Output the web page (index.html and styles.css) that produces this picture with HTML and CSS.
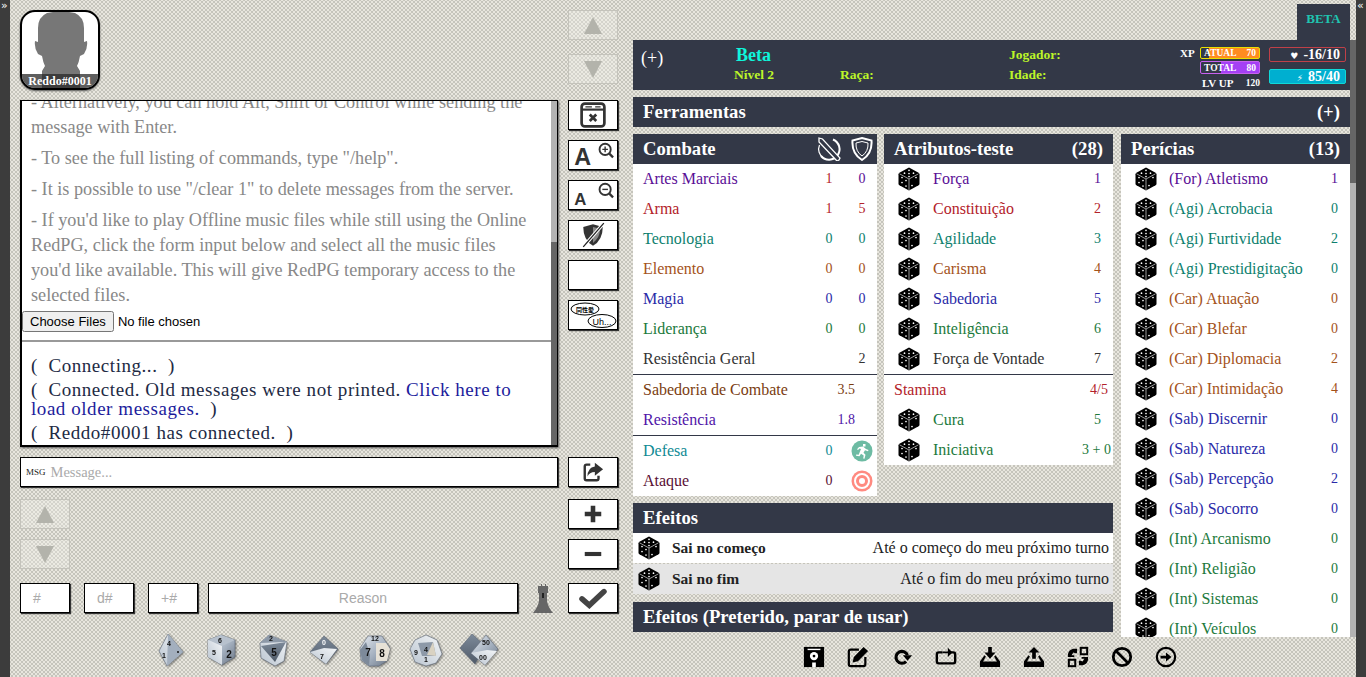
FILE: index.html
```html
<!DOCTYPE html>
<html lang="en">
<head>
<meta charset="UTF-8">
<meta name="viewport" content="width=device-width, initial-scale=1.0">
<title>RedPG</title>
<link rel="stylesheet" href="styles.css">
</head>
<body>

<svg class="sprites" aria-hidden="true">
    <symbol id="die" viewBox="0 0 24 24">
        <path d="M12 .5l9.600 5.200q.9.5.9 1.500v9.600q0 1-.9 1.500L12 23.500 2.400 18.300q-.9-.5-.9-1.500V7.200q0-1 .9-1.500z" fill="#000"/>
        <path d="M2.500 6.800L12 12l9.500-5.200M12 12v11" fill="none" stroke="#fff" stroke-width=".6"/>
        <g fill="#fff">
            <circle cx="12" cy="3.300" r=".85"/><circle cx="7.500" cy="6.200" r=".85"/><circle cx="16.500" cy="6.200" r=".85"/><circle cx="12" cy="6.500" r=".85"/><circle cx="12" cy="9.500" r=".85"/>
            <circle cx="5" cy="10.500" r=".85"/><circle cx="9" cy="13.500" r=".85"/><circle cx="5" cy="15.500" r=".85"/><circle cx="9" cy="19" r=".85"/>
            <circle cx="19" cy="10.500" r=".85"/><circle cx="15" cy="18.500" r=".85"/>
        </g>
    </symbol>
    <linearGradient id="steel" x1="0" y1="0" x2="1" y2="1">
        <stop offset="0" stop-color="#e6ebf1"/><stop offset=".55" stop-color="#a3afbe"/><stop offset="1" stop-color="#6a7584"/>
    </linearGradient>
    <linearGradient id="steel2" x1="1" y1="0" x2="0" y2="1">
        <stop offset="0" stop-color="#f4f6f8"/><stop offset="1" stop-color="#b9c4d0"/>
    </linearGradient>
    <linearGradient id="steel3" x1="0" y1="0" x2="0" y2="1">
        <stop offset="0" stop-color="#7d8a9a"/><stop offset="1" stop-color="#4f5a68"/>
    </linearGradient>
</svg>

<div class="rail"><span class="rail-arrow">»</span></div>

<div class="chat-col">
    <div class="chat-top">
        <div class="avatar">
            <svg class="avatar-pic" viewBox="0 0 76 76">
                <path d="M25 1q14-3 28 0 9 4 9 15v14l3-1q1 7-3 13l-4 2q-1 6-3 10l3 5v17H20V59l3-5q-2-4-3-10l-4-2q-4-6-3-13l3 1V16q0-11 9-15z" fill="#777"/>
            </svg>
            <div class="avatar-name">Reddo#0001</div>
        </div>
        <div class="btn-stack">
            <div class="btn-faded"><span class="tri-up"></span></div>
            <div class="btn-faded"><span class="tri-down"></span></div>
        </div>
    </div>

    <div class="chat-mid">
        <div class="chat-box">
            <div class="chat-main">
                <div class="help">
                    <p>- Alternatively, you can hold Alt, Shift or Control while sending the<br>message with Enter.</p>
                    <p>- To see the full listing of commands, type "/help".</p>
                    <p>- It is possible to use "/clear 1" to delete messages from the server.</p>
                    <p>- If you'd like to play Offline music files while still using the Online<br>RedPG, click the form input below and select all the music files<br>you'd like available. This will give RedPG temporary access to the<br>selected files.</p>
                    <input class="file-input" type="file" multiple>
                </div>
                <div class="messages">
                    <p>( &nbsp;Connecting... &nbsp;)</p>
                    <p>( &nbsp;Connected. Old messages were not printed. <a class="link">Click here to load older messages.</a> &nbsp;)</p>
                    <p>( &nbsp;Reddo#0001 has connected. &nbsp;)</p>
                </div>
            </div>
            <div class="chat-scroll"><div class="chat-thumb"></div></div>
        </div>
        <div class="tool-stack">
            <div class="btn">
                <svg class="ico-win" viewBox="0 0 24 24"><rect x="1.500" y="1.500" width="21" height="21" rx="3" fill="none" stroke="#333" stroke-width="2.500"/><path d="M2 7h20" stroke="#333" stroke-width="2"/><path d="M5 4.500h6M14 4.500h5" stroke="#333"/><path d="M9 11.500l6 6M15 11.500l-6 6" stroke="#333" stroke-width="2.500"/></svg>
            </div>
            <div class="btn">
                <svg class="ico-wide" viewBox="0 0 50 30"><text class="ico-letter" x="5" y="26" font-size="25">A</text><circle cx="38" cy="9" r="6" fill="none" stroke="#333" stroke-width="2"/><path d="M35 9h6M38 6v6" stroke="#333" stroke-width="1.500"/><path d="M42.500 13.500l4 4" stroke="#333" stroke-width="2.500"/></svg>
            </div>
            <div class="btn">
                <svg class="ico-wide" viewBox="0 0 50 30"><text class="ico-letter" x="5" y="26" font-size="18">A</text><circle cx="38" cy="9" r="6" fill="none" stroke="#333" stroke-width="2"/><path d="M35 9h6" stroke="#333" stroke-width="1.500"/><path d="M42.500 13.500l4 4" stroke="#333" stroke-width="2.500"/></svg>
            </div>
            <div class="btn">
                <svg class="ico-win" viewBox="0 0 24 24"><path d="M12 2l9 2.500q0 12-9 17.500-9-5.500-9-17.500z" fill="#333"/><path d="M12 4.500l6.500 1.800q0 8-6.500 13z" fill="#888"/><path d="M3 23L22 1" stroke="#fff" stroke-width="3"/><path d="M3 23L22 1" stroke="#222" stroke-width="1.200"/></svg>
            </div>
            <div class="btn"></div>
            <div class="btn">
                <svg class="ico-chatter" viewBox="0 0 48 28">
                    <ellipse cx="16" cy="8" rx="14" ry="6" fill="#fff" stroke="#000"/>
                    <text class="ico-cjk" x="16" y="10.500" text-anchor="middle">同性愛</text>
                    <ellipse cx="33" cy="20" rx="14" ry="6.500" fill="#fff" stroke="#000"/>
                    <text class="ico-uh" x="33" y="23.500" text-anchor="middle">Uh...</text>
                </svg>
            </div>
        </div>
    </div>

    <div class="msg-row">
        <div class="msg-box"><span class="msg-tag">MSG</span><span class="msg-hint">Message...</span></div>
        <div class="btn">
            <svg class="ico-small" viewBox="0 0 24 24"><path d="M9 4H5Q3 4 3 6v13q0 2 2 2h11q2 0 2-2v-3" fill="none" stroke="#333" stroke-width="2.600"/><path d="M14 2l9 7-9 7v-4q-6 0-8 5 0-10 8-11z" fill="#333"/></svg>
        </div>
    </div>

    <div class="adjust-row">
        <div class="btn-col">
            <div class="btn-faded"><span class="tri-up"></span></div>
            <div class="btn-faded"><span class="tri-down"></span></div>
        </div>
        <div class="btn-col">
            <div class="btn"><svg class="ico-small" viewBox="0 0 24 24"><path d="M12 3v18M3 12h18" stroke="#333" stroke-width="5"/></svg></div>
            <div class="btn"><svg class="ico-small" viewBox="0 0 24 24"><path d="M3 12h18" stroke="#333" stroke-width="4.500"/></svg></div>
        </div>
    </div>

    <div class="roll-row">
        <div class="field field-num"><span class="field-hint">#</span></div>
        <div class="field field-num"><span class="field-hint">d#</span></div>
        <div class="field field-num"><span class="field-hint">+#</span></div>
        <div class="field field-reason">Reason</div>
        <svg class="ico-tower" viewBox="0 0 22 30"><path d="M6 3h3V1h1v2h3V1h1v2h2v7h-1v8q1 6 6 12H1q5-6 6-12v-8H6z" fill="#666"/><path d="M11 10v5" stroke="#222" stroke-width="2"/></svg>
        <div class="btn"><svg class="ico-check" viewBox="0 0 32 24"><path d="M4 13l8 7L28 5" fill="none" stroke="#444" stroke-width="6" stroke-linecap="round"/></svg></div>
    </div>

    <div class="dice-row">
        <svg class="poly" viewBox="0 0 36 36"><path d="M15 2l15 18-16 14L6 19z" fill="url(#steel2)" stroke="#5c6675" stroke-width=".6"/><path d="M15 2l-1 32 16-14z" fill="#a3afbe"/><text class="pip" x="16" y="14">4</text><text class="pip" x="11" y="26">1</text><circle cx="25" cy="20" r="1" fill="#111"/></svg>
        <svg class="poly" viewBox="0 0 36 36"><path d="M17 3l14 5v17l-13 8-14-8V8z" fill="url(#steel)" stroke="#5c6675" stroke-width=".6"/><path d="M17 3l14 5-13 6L4 8z" fill="#b7c1cd"/><path d="M4 8l14 6v19L4 25z" fill="url(#steel2)"/><text class="pip pip-big" x="25" y="26">2</text><text class="pip" x="16" y="11">6</text><text class="pip" x="10" y="23">5</text></svg>
        <svg class="poly" viewBox="0 0 36 36"><path d="M14 3l18 7-3 19-9 5L6 26 5 11z" fill="url(#steel2)" stroke="#5c6675" stroke-width=".6"/><path d="M6 14l25-4-11 20z" fill="url(#steel3)"/><path d="M5 11l9-8 18 7z" fill="#8d99a8"/><text class="pip pip-big" x="19" y="24">5</text><text class="pip" x="16" y="9">2</text></svg>
        <svg class="poly" viewBox="0 0 36 36"><path d="M18 4l14 13-12 15L4 20z" fill="url(#steel3)" stroke="#5c6675" stroke-width=".6"/><path d="M4 20l14-4 13 1-11 15z" fill="url(#steel2)"/><text class="pip pip-light" x="18" y="13">0</text><text class="pip" x="16" y="27">7</text></svg>
        <svg class="poly" viewBox="0 0 36 36"><path d="M11 4h14l8 12-3 13-8 5H12l-8-6-1-12z" fill="url(#steel)" stroke="#5c6675" stroke-width=".6"/><path d="M9 10L3 18l2 10 7 6 1-11z" fill="#7d8a9a"/><path d="M19 11h10l4 6-3 12H19z" fill="#e6e1d6"/><text class="pip pip-big" x="25" y="25">8</text><text class="pip pip-big" x="11" y="24">7</text><text class="pip" x="18" y="9">12</text></svg>
        <svg class="poly" viewBox="0 0 36 36"><path d="M18 3l11 5 5 14-6 9-10 3-11-4-5-13 5-9z" fill="url(#steel2)" stroke="#5c6675" stroke-width=".6"/><path d="M10 11l15-1 3 14H14z" fill="#8d99a8"/><path d="M25 10l3 14-9-1z" fill="#d9d2c2"/><text class="pip" x="18" y="20">4</text><text class="pip" x="8" y="23">9</text><text class="pip" x="18" y="30">1</text></svg>
        <svg class="poly poly-wide" viewBox="0 0 40 36"><path d="M13 2l13 12-10 18L1 16z" fill="url(#steel3)" stroke="#5c6675" stroke-width=".6"/><path d="M27 3l12 14-13 16-14-12z" fill="url(#steel)" stroke="#5c6675" stroke-width=".6"/><path d="M12 21l16-3 10 1-12 14z" fill="url(#steel2)"/><text class="pip" x="27" y="13">50</text><text class="pip" x="24" y="28">00</text></svg>
    </div>
</div>

<div class="sheet-col">
    <div class="tab-row"><div class="tab">BETA</div></div>
    <div class="sheet-view">
        <div class="sheet">
            <div class="sheet-head">
                <div class="head-plus">(+)</div>
                <div class="head-block head-name"><div class="char-name">Beta</div><div class="head-label">Nível 2</div></div>
                <div class="head-block head-race"><div class="head-label"></div><div class="head-label">Raça:</div></div>
                <div class="head-block head-player"><div class="head-label">Jogador:</div><div class="head-label">Idade:</div></div>
                <div class="xp-label">XP</div>
                <div class="xp-bars">
                    <div class="xp-bar xp-now"><span>ATUAL</span><span>70</span></div>
                    <div class="xp-bar xp-total"><span>TOTAL</span><span>80</span></div>
                    <div class="xp-bar xp-lvl"><span>LV UP</span><span class="xp-num">120</span></div>
                </div>
                <div class="stat-boxes">
                    <div class="stat stat-hp"><span class="stat-ico">♥</span>-16/10</div>
                    <div class="stat stat-en"><span class="stat-ico">⚡</span>85/40</div>
                </div>
            </div>

            <div class="bar tools"><span>Ferramentas</span><span>(+)</span></div>

            <div class="sheet-grid">
                <div class="sheet-left">
                    <div class="sheet-top">
                        <div class="panel combat">
                            <div class="bar">
                                <span class="bar-title">Combate</span>
                                <svg class="head-ico" viewBox="0 0 24 24"><path d="M16 2.500A10.500 10.500 0 1 1 4 19" fill="none" stroke="#fff" stroke-width="2"/><path d="M6.500 21A10.500 10.500 0 0 1 2.500 8" fill="none" stroke="#fff" stroke-width="1.200"/><path d="M2 1l3.500 1 17.500 19-1 2-2 1L2 5z" fill="#333847" stroke="#fff" stroke-width="1.300"/></svg>
                                <svg class="head-ico" viewBox="0 0 24 24"><path d="M12 1l9.500 2.500q1 13-9.500 19.500Q1.500 16.500 2.500 3.500z" fill="none" stroke="#fff" stroke-width="2"/><path d="M12 4.500l6 1.500q.5 8.500-6 13-6.500-4.500-6-13z" fill="none" stroke="#fff" stroke-width="1"/></svg>
                            </div>
                            <div class="row c-for"><span class="name">Artes Marciais</span><span class="v c-red">1</span><span class="v">0</span></div>
                            <div class="row c-red"><span class="name">Arma</span><span class="v">1</span><span class="v">5</span></div>
                            <div class="row c-agi"><span class="name">Tecnologia</span><span class="v">0</span><span class="v">0</span></div>
                            <div class="row c-car"><span class="name">Elemento</span><span class="v">0</span><span class="v">0</span></div>
                            <div class="row c-sab"><span class="name">Magia</span><span class="v">0</span><span class="v">0</span></div>
                            <div class="row c-int"><span class="name">Liderança</span><span class="v">0</span><span class="v">0</span></div>
                            <div class="row c-dark"><span class="name">Resistência Geral</span><span class="v">2</span></div>
                            <div class="rule"></div>
                            <div class="row c-wis"><span class="name">Sabedoria de Combate</span><span class="v-wide">3.5</span></div>
                            <div class="row c-res"><span class="name">Resistência</span><span class="v-wide">1.8</span></div>
                            <div class="rule"></div>
                            <div class="row c-def"><span class="name">Defesa</span><span class="v">0</span>
                                <span class="v"><svg class="badge" viewBox="0 0 22 22"><circle cx="11" cy="11" r="10.500" fill="#6dbba3"/><path d="M12 4h2.500v2.500H12zM8 7l4-.5 3 2.500 2.500 1-.5 1.200-3-1-1.500 2.500 2 2-1 4-1.300-.3.5-3-2.700-1.700-1.500 2.500-3.500-.5.2-1.200 2.500.2L10 9 8.500 8.500 7 10l-1-.8z" fill="#fff"/></svg></span></div>
                            <div class="row c-atk"><span class="name">Ataque</span><span class="v">0</span>
                                <span class="v"><svg class="badge" viewBox="0 0 22 22"><circle cx="11" cy="11" r="10.500" fill="#ff8a80"/><circle cx="11" cy="11" r="7" fill="none" stroke="#fff" stroke-width="2"/><circle cx="11" cy="11" r="3" fill="#fff"/></svg></span></div>
                        </div>

                        <div class="panel dice-panel">
                            <div class="bar"><span>Atributos-teste</span><span>(28)</span></div>
                            <div class="row c-for"><svg class="die"><use href="#die"/></svg><span class="name">Força</span><span class="n">1</span></div>
                            <div class="row c-red"><svg class="die"><use href="#die"/></svg><span class="name">Constituição</span><span class="n">2</span></div>
                            <div class="row c-agi"><svg class="die"><use href="#die"/></svg><span class="name">Agilidade</span><span class="n">3</span></div>
                            <div class="row c-car"><svg class="die"><use href="#die"/></svg><span class="name">Carisma</span><span class="n">4</span></div>
                            <div class="row c-sab"><svg class="die"><use href="#die"/></svg><span class="name">Sabedoria</span><span class="n">5</span></div>
                            <div class="row c-int"><svg class="die"><use href="#die"/></svg><span class="name">Inteligência</span><span class="n">6</span></div>
                            <div class="row c-dark"><svg class="die"><use href="#die"/></svg><span class="name">Força de Vontade</span><span class="n">7</span></div>
                            <div class="rule"></div>
                            <div class="row row-plain c-red"><span class="name">Stamina</span><span class="n">4/5</span></div>
                            <div class="row c-int"><svg class="die"><use href="#die"/></svg><span class="name">Cura</span><span class="n">5</span></div>
                            <div class="row row-wide c-int"><svg class="die"><use href="#die"/></svg><span class="name">Iniciativa</span><span class="n">3 + 0</span></div>
                        </div>
                    </div>

                    <div class="bar effects-head">Efeitos</div>
                    <div class="effect"><svg class="die"><use href="#die"/></svg><b>Sai no começo</b><span>Até o começo do meu próximo turno</span></div>
                    <div class="effect effect-alt"><svg class="die"><use href="#die"/></svg><b>Sai no fim</b><span>Até o fim do meu próximo turno</span></div>
                    <div class="bar effects-old">Efeitos (Preterido, parar de usar)</div>
                </div>

                <div class="panel dice-panel skills">
                    <div class="bar"><span>Perícias</span><span>(13)</span></div>
                    <div class="row c-for"><svg class="die"><use href="#die"/></svg><span class="name">(For) Atletismo</span><span class="n">1</span></div>
                    <div class="row c-agi"><svg class="die"><use href="#die"/></svg><span class="name">(Agi) Acrobacia</span><span class="n">0</span></div>
                    <div class="row c-agi"><svg class="die"><use href="#die"/></svg><span class="name">(Agi) Furtividade</span><span class="n">2</span></div>
                    <div class="row c-agi"><svg class="die"><use href="#die"/></svg><span class="name">(Agi) Prestidigitação</span><span class="n">0</span></div>
                    <div class="row c-car"><svg class="die"><use href="#die"/></svg><span class="name">(Car) Atuação</span><span class="n">0</span></div>
                    <div class="row c-car"><svg class="die"><use href="#die"/></svg><span class="name">(Car) Blefar</span><span class="n">0</span></div>
                    <div class="row c-car"><svg class="die"><use href="#die"/></svg><span class="name">(Car) Diplomacia</span><span class="n">2</span></div>
                    <div class="row c-car"><svg class="die"><use href="#die"/></svg><span class="name">(Car) Intimidação</span><span class="n">4</span></div>
                    <div class="row c-sab"><svg class="die"><use href="#die"/></svg><span class="name">(Sab) Discernir</span><span class="n">0</span></div>
                    <div class="row c-sab"><svg class="die"><use href="#die"/></svg><span class="name">(Sab) Natureza</span><span class="n">0</span></div>
                    <div class="row c-sab"><svg class="die"><use href="#die"/></svg><span class="name">(Sab) Percepção</span><span class="n">2</span></div>
                    <div class="row c-sab"><svg class="die"><use href="#die"/></svg><span class="name">(Sab) Socorro</span><span class="n">0</span></div>
                    <div class="row c-int"><svg class="die"><use href="#die"/></svg><span class="name">(Int) Arcanismo</span><span class="n">0</span></div>
                    <div class="row c-int"><svg class="die"><use href="#die"/></svg><span class="name">(Int) Religião</span><span class="n">0</span></div>
                    <div class="row c-int"><svg class="die"><use href="#die"/></svg><span class="name">(Int) Sistemas</span><span class="n">0</span></div>
                    <div class="row c-int"><svg class="die"><use href="#die"/></svg><span class="name">(Int) Veículos</span><span class="n">0</span></div>
                </div>
            </div>
        </div>
        <div class="sheet-scroll"><div class="sheet-thumb"></div></div>
    </div>

    <div class="action-row">
        <svg class="act" viewBox="0 0 24 24"><path d="M1 1h22v22H1z" fill="#000"/><path d="M5 3h14v1.500H5z" fill="#fff"/><circle cx="12" cy="11" r="4.500" fill="#fff"/><circle cx="12" cy="11" r="1.500" fill="#000"/><path d="M10 18h4v5h-4z" fill="#fff"/></svg>
        <svg class="act" viewBox="0 0 24 24"><path d="M13 4H4Q2 4 2 6v14q0 2 2 2h14q2 0 2-2v-8" fill="none" stroke="#000" stroke-width="2.400"/><path d="M18 1l5 4.500-11 11-6 1.500 1.500-6z" fill="#000"/></svg>
        <svg class="act" viewBox="0 0 24 24"><path d="M16.500 17A6.500 6.500 0 1 1 18 10" fill="none" stroke="#000" stroke-width="3.400"/><path d="M13 10h10l-5 6z" fill="#000"/></svg>
        <svg class="act" viewBox="0 0 24 24"><path d="M8 7H4Q2 7 2 9v8q0 2 2 2h16q2 0 2-2V9q0-2-2-2h-4" fill="none" stroke="#000" stroke-width="2.600"/><path d="M14 2l5 5-5 5zM8 6h7v2H8z" fill="#000"/></svg>
        <svg class="act" viewBox="0 0 24 24"><path d="M10 1h4v6h4l-6 7-6-7h4z" fill="#000"/><path d="M6 10l-5 7v6h22v-6l-5-7-1.500 1.500 3 5.500H4.500l3-5.500z" fill="#000"/></svg>
        <svg class="act" viewBox="0 0 24 24"><path d="M10 14h4V7h4l-6-6-6 6h4z" fill="#000"/><path d="M6 10l-5 7v6h22v-6l-5-7-1.500 1.500 3 5.500H4.500l3-5.500z" fill="#000"/></svg>
        <svg class="act" viewBox="0 0 24 24"><rect x="15" y="2" width="7" height="7" fill="none" stroke="#000" stroke-width="2.200"/><rect x="2" y="15" width="7" height="7" fill="none" stroke="#000" stroke-width="2.200"/><path d="M11 3v5H9L7 7 5 10h3v2H1V9q1-5 6-6zM13 21v-5h2l2 1 2-3h-3v-2h7v3q-1 5-6 6z" fill="#000"/></svg>
        <svg class="act" viewBox="0 0 24 24"><circle cx="12" cy="12" r="9.500" fill="none" stroke="#000" stroke-width="3"/><path d="M5 5l14 14" stroke="#000" stroke-width="3"/></svg>
        <svg class="act" viewBox="0 0 24 24"><circle cx="12" cy="12" r="10" fill="none" stroke="#000" stroke-width="2.400"/><path d="M6 10.500h6V7l6 5-6 5v-3.500H6z" fill="#000"/></svg>
    </div>
</div>

<div class="rail"><span class="rail-arrow">«</span></div>

</body>
</html>
```
FILE: styles.css
```css
html, body {
    height: 100%;
}
body {
    margin: 0;
    width: 1366px;
    height: 677px;
    overflow: hidden;
    display: flex;
    font-family: "Liberation Serif", serif;
    font-size: 16px;
    background-color: #e8e6de;
    background-image:
        linear-gradient(45deg, transparent 42%, rgba(125, 125, 115, .32) 42% 58%, transparent 58%),
        linear-gradient(-45deg, transparent 42%, rgba(125, 125, 115, .32) 42% 58%, transparent 58%);
    background-size: 4px 4px;
}
p {
    margin: 0;
}
.sprites {
    width: 0;
    height: 0;
    flex: none;
}

/* side rails */
.rail {
    width: 10px;
    flex: none;
    background-color: #3c3c3c;
    color: #fff;
}
.rail-arrow {
    display: block;
    font: 11px/11px "DejaVu Sans", sans-serif;
    padding-left: 1px;
}

/* chat */
.chat-col {
    width: 623px;
    flex: none;
    padding-left: 10px;
    box-sizing: border-box;
}
.chat-top {
    height: 100px;
    padding: 10px 15px 0 0;
    box-sizing: border-box;
    display: flex;
    justify-content: space-between;
}
.avatar {
    width: 80px;
    height: 80px;
    box-sizing: border-box;
    border: 2px solid #000;
    border-radius: 15px;
    background-color: #fff;
    overflow: hidden;
    display: flex;
    flex-direction: column;
    box-shadow: 0 1px 2px #555;
}
.avatar-pic {
    width: 76px;
    height: 76px;
    flex: none;
}
.avatar-name {
    margin-top: -14px;
    height: 14px;
    background-color: rgba(40, 40, 40, .75);
    color: #fff;
    font-size: 12px;
    font-weight: bold;
    line-height: 15px;
    text-align: center;
    white-space: nowrap;
}
.btn-stack {
    display: flex;
    flex-direction: column;
    gap: 14px;
}
.btn, .btn-faded {
    width: 50px;
    height: 30px;
    box-sizing: border-box;
    flex: none;
    display: flex;
    align-items: center;
    justify-content: center;
}
.btn {
    background-color: #fff;
    border: 1px solid #000;
    box-shadow: 1px 1px 1px #333;
}
.btn-faded {
    border: 1px solid #c4c3bb;
    background-color: rgba(240, 240, 235, .35);
}
.tri-up, .tri-down {
    width: 0;
    height: 0;
    border-left: 9px solid transparent;
    border-right: 9px solid transparent;
}
.tri-up {
    border-bottom: 17px solid #b3b3ab;
}
.tri-down {
    border-top: 17px solid #b3b3ab;
}
.chat-mid {
    display: flex;
    gap: 10px;
    height: 347px;
}
.chat-box {
    width: 538px;
    box-sizing: border-box;
    border: 1px solid #000;
    border-bottom-width: 2px;
    border-left-width: 2px;
    background-color: #fff;
    display: flex;
    box-shadow: 1px 1px 2px #555;
}
.chat-main {
    flex: 1;
    min-width: 0;
    display: flex;
    flex-direction: column;
}
.help {
    height: 241px;
    flex: none;
    overflow: hidden;
    display: flex;
    flex-direction: column;
    justify-content: flex-end;
    padding: 0 0 7px 9px;
    box-sizing: border-box;
    border-bottom: 2px solid #999;
    color: #888;
    font-size: 18.2px;
    line-height: 25px;
    white-space: nowrap;
}
.help p {
    margin-bottom: 6px;
}
.help p:nth-child(4) {
    margin-bottom: 3px;
}
.file-input {
    margin-left: -9px;
    height: 22px;
    flex: none;
    font: 13px "Liberation Sans", sans-serif;
    color: #000;
}
.messages {
    padding: 14px 16px 0 9px;
    color: #222a44;
    font-size: 19px;
    letter-spacing: .55px;
    line-height: 19px;
    overflow: hidden;
}
.messages p {
    margin-bottom: 5px;
}
.link {
    color: #1c1c9c;
}
.chat-scroll {
    width: 6px;
    flex: none;
    background-color: #b3b3b3;
    display: flex;
    flex-direction: column;
    justify-content: flex-end;
}
.chat-thumb {
    height: 203px;
    background-color: #666;
}
.tool-stack {
    display: flex;
    flex-direction: column;
    gap: 10px;
}
.ico-win {
    width: 26px;
    height: 26px;
}
.ico-wide {
    width: 48px;
    height: 28px;
}
.ico-letter {
    font-family: "Liberation Sans", sans-serif;
    font-weight: bold;
    fill: #333;
}
.ico-chatter {
    width: 48px;
    height: 28px;
}
.ico-cjk {
    font-family: "Noto Sans CJK JP", sans-serif;
    font-size: 6px;
    font-weight: bold;
}
.ico-uh {
    font-family: "Liberation Sans", sans-serif;
    font-size: 9px;
}
.ico-small {
    width: 22px;
    height: 22px;
}
.ico-check {
    width: 30px;
    height: 22px;
}
.ico-tower {
    width: 22px;
    height: 30px;
    margin-left: 14px;
    margin-right: 14px;
    flex: none;
}
.msg-row {
    display: flex;
    gap: 10px;
    margin-top: 10px;
}
.msg-box {
    width: 538px;
    height: 30px;
    box-sizing: border-box;
    background-color: #fff;
    border: 1px solid #000;
    box-shadow: 1px 1px 1px #333;
    display: flex;
    align-items: center;
    padding-left: 5px;
    gap: 5px;
}
.msg-tag {
    font-size: 9px;
    color: #222;
}
.msg-hint {
    font-size: 14.5px;
    color: #aaa;
}
.adjust-row {
    width: 598px;
    display: flex;
    justify-content: space-between;
    margin-top: 12px;
}
.btn-col {
    display: flex;
    flex-direction: column;
    gap: 10px;
}
.roll-row {
    width: 598px;
    display: flex;
    align-items: center;
    margin-top: 14px;
}
.field {
    height: 30px;
    box-sizing: border-box;
    background-color: #fff;
    border: 1px solid #000;
    box-shadow: 1px 1px 1px #333;
    font: 14px/28px "Liberation Sans", sans-serif;
    color: #aaa;
}
.field-num {
    width: 50px;
    margin-right: 14px;
    padding-left: 12px;
}
.field-num:nth-child(3) {
    margin-right: 10px;
}
.field-reason {
    width: 310px;
    text-align: center;
}
.dice-row {
    display: flex;
    gap: 15px;
    padding-left: 133px;
    margin-top: 19px;
}
.poly {
    width: 36px;
    height: 36px;
    flex: none;
    filter: drop-shadow(1px 1px 1px rgba(0, 0, 0, .4));
}
.poly-wide {
    width: 40px;
}
.pip {
    font: bold 7px "Liberation Sans", sans-serif;
    text-anchor: middle;
    fill: #111;
}
.pip-big {
    font-size: 10px;
}
.pip-light {
    fill: #fff;
}

/* sheet */
.sheet-col {
    width: 723px;
    flex: none;
}
.tab-row {
    height: 40px;
    display: flex;
    justify-content: flex-end;
    align-items: flex-end;
    padding-right: 6px;
}
.tab {
    width: 53px;
    height: 36px;
    background-color: #333847;
    color: #1fc4b0;
    font-size: 13px;
    font-weight: bold;
    line-height: 30px;
    text-align: center;
}
.sheet-view {
    height: 597px;
    display: flex;
    overflow: hidden;
}
.sheet {
    width: 717px;
    flex: none;
}
.sheet-scroll {
    width: 6px;
    flex: none;
    background-color: #b3b3b3;
}
.sheet-thumb {
    height: 143px;
    background-color: #666;
}
.sheet-head {
    height: 50px;
    background-color: #333847;
    display: flex;
    color: #fff;
}
.head-plus {
    width: 93px;
    padding: 8px 0 0 8px;
    font-size: 18px;
    flex: none;
}
.head-block {
    flex: none;
    display: flex;
    flex-direction: column;
    padding-top: 6px;
}
.head-name {
    width: 106px;
    align-items: flex-start;
}
.head-race {
    width: 169px;
}
.head-player {
    width: 171px;
}
.char-name {
    color: #0ff5db;
    font-size: 18px;
    font-weight: bold;
    line-height: 18px;
    margin-left: 2px;
}
.head-label {
    color: #bdf529;
    font-size: 13.5px;
    font-weight: bold;
    line-height: 18px;
    height: 20px;
    white-space: nowrap;
}
.head-name .head-label {
    margin-top: 2px;
}
.xp-label {
    width: 20px;
    flex: none;
    font-size: 11px;
    font-weight: bold;
    padding-top: 7px;
}
.xp-bars {
    width: 60px;
    flex: none;
    padding-top: 7px;
    display: flex;
    flex-direction: column;
    gap: 2px;
}
.xp-bar {
    height: 12px;
    box-sizing: border-box;
    display: flex;
    justify-content: space-between;
    align-items: center;
    padding: 0 3px;
    font-size: 9.5px;
    font-weight: bold;
    border-radius: 2px;
    white-space: nowrap;
}
.xp-now {
    border: 1px solid #e8e000;
    background-image: linear-gradient(90deg, #333847 0 8px, #ff8c20 8px);
}
.xp-total {
    border: 1px solid #c860f0;
    height: 13px;
    background-image: linear-gradient(90deg, #333847 0 20px, #a440f5 20px);
}
.xp-lvl {
    padding: 2px 0 0 2px;
    font-size: 11px;
}
.xp-num {
    font-size: 9.5px;
}
.stat-boxes {
    width: 77px;
    margin-left: 9px;
    flex: none;
    padding-top: 7px;
    display: flex;
    flex-direction: column;
    gap: 7px;
}
.stat {
    height: 15px;
    box-sizing: border-box;
    border-radius: 2px;
    font-size: 14px;
    font-weight: bold;
    line-height: 13px;
    text-align: right;
    padding-right: 5px;
}
.stat-ico {
    font-family: "DejaVu Sans", sans-serif;
    font-size: 9px;
    margin-right: 5px;
}
.stat-hp {
    border: 1px solid #c04048;
}
.stat-en {
    border: 1px solid #10d8d8;
    background-color: #00afd0;
}
.bar {
    height: 30px;
    background-color: #333847;
    color: #fff;
    font-size: 18.7px;
    font-weight: bold;
    line-height: 30px;
    display: flex;
    justify-content: space-between;
    padding: 0 10px;
    flex: none;
    white-space: nowrap;
}
.tools {
    margin: 7px 0;
}
.sheet-grid {
    display: flex;
}
.sheet-left {
    width: 480px;
    flex: none;
}
.sheet-top {
    display: flex;
    gap: 7px;
    align-items: flex-start;
}
.panel {
    background-color: #fff;
    flex: none;
}
.combat {
    width: 244px;
}
.combat .bar {
    padding-right: 0;
    gap: 3px;
    align-items: center;
}
.bar-title {
    flex: 1;
}
.head-ico {
    width: 30px;
    height: 24px;
    flex: none;
}
.row {
    height: 30px;
    display: flex;
    align-items: center;
    font-size: 16px;
    padding-left: 10px;
    gap: 3px;
    white-space: nowrap;
}
.name {
    flex: 1;
}
.v {
    width: 30px;
    flex: none;
    font-size: 14px;
    text-align: center;
    display: flex;
    justify-content: center;
}
.n {
    font-size: 14px;
}
.v-wide {
    font-size: 14px;
    padding-right: 22px;
}
.rule {
    height: 1px;
    background-color: #333847;
}
.badge {
    width: 22px;
    height: 22px;
    display: block;
}
.dice-panel {
    width: 229px;
}
.dice-panel .row {
    padding: 0 12px 0 13px;
    gap: 0;
}
.dice-panel .row-plain {
    padding: 0 5px 0 10px;
}
.dice-panel .row-wide {
    padding-right: 2px;
}
.die {
    width: 24px;
    height: 24px;
    flex: none;
    margin-right: 12px;
}
.skills {
    margin-left: 8px;
}
.skills .die {
    margin-right: 11px;
}
.effects-head {
    margin-top: 7px;
}
.effect {
    height: 30px;
    background-color: #fff;
    color: #222;
    display: flex;
    align-items: center;
    padding: 0 4px;
    font-size: 16px;
    white-space: nowrap;
}
.effect .die {
    margin-right: 11px;
}
.effect b {
    flex: 1;
    font-size: 15.5px;
}
.effect-alt {
    background-color: #e5e5e5;
    margin-top: 1px;
}
.effects-old {
    margin-top: 8px;
}
.action-row {
    display: flex;
    gap: 22px;
    padding: 9px 0 0 170px;
}
.act {
    width: 22px;
    height: 22px;
    flex: none;
}

/* label colours */
.c-for { color: #5a0e96; }
.c-red { color: #b3222a; }
.c-agi { color: #0d7f6e; }
.c-car { color: #a4521a; }
.c-sab { color: #2a2aa8; }
.c-int { color: #1c7a3c; }
.c-dark { color: #333; }
.c-wis { color: #7a3c10; }
.c-res { color: #5014a8; }
.c-def { color: #108a94; }
.c-atk { color: #5a1034; }
```
